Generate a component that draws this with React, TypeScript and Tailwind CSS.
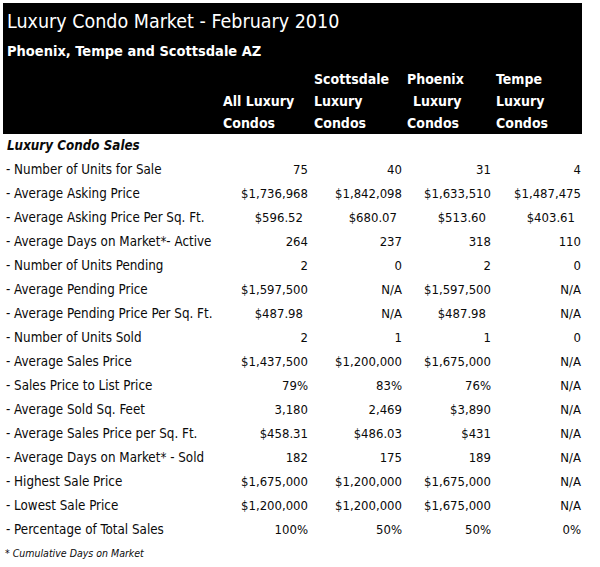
import React from "react";

type Row = { label: string; v: string[]; pad?: boolean[] };

const rows: Row[] = [
  { label: "- Number of Units for Sale", v: ["75", "40", "31", "4"] },
  { label: "- Average Asking Price", v: ["$1,736,968", "$1,842,098", "$1,633,510", "$1,487,475"] },
  { label: "- Average Asking Price Per Sq. Ft.", v: ["$596.52", "$680.07", "$513.60", "$403.61"], pad: [true, true, true, true] },
  { label: "- Average Days on Market*- Active", v: ["264", "237", "318", "110"] },
  { label: "- Number of Units Pending", v: ["2", "0", "2", "0"] },
  { label: "- Average Pending Price", v: ["$1,597,500", "N/A", "$1,597,500", "N/A"] },
  { label: "- Average Pending Price Per Sq. Ft.", v: ["$487.98", "N/A", "$487.98", "N/A"], pad: [true, false, true, false] },
  { label: "- Number of Units Sold", v: ["2", "1", "1", "0"] },
  { label: "- Average Sales Price", v: ["$1,437,500", "$1,200,000", "$1,675,000", "N/A"] },
  { label: "- Sales Price to List Price", v: ["79%", "83%", "76%", "N/A"] },
  { label: "- Average Sold Sq. Feet", v: ["3,180", "2,469", "$3,890", "N/A"] },
  { label: "- Average Sales Price per Sq. Ft.", v: ["$458.31", "$486.03", "$431", "N/A"] },
  { label: "- Average Days on Market* - Sold", v: ["182", "175", "189", "N/A"] },
  { label: "- Highest Sale Price", v: ["$1,675,000", "$1,200,000", "$1,675,000", "N/A"] },
  { label: "- Lowest Sale Price", v: ["$1,200,000", "$1,200,000", "$1,675,000", "N/A"] },
  { label: "- Percentage of Total Sales", v: ["100%", "50%", "50%", "0%"] },
];

const font = { fontFamily: '"DejaVu Sans Condensed", "DejaVu Sans", sans-serif' };

export default function App() {
  return (
    <div className="w-[600px] h-[567px] bg-white pt-[3px] text-[#0a0a0a]" style={font}>
      <div className="ml-[3px] w-[579px]">
        <div className="bg-black text-white pt-[7px]">
          <div className="h-[24px] leading-[24px] text-[19.5px] pl-[4px] whitespace-nowrap">Luxury Condo Market - February 2010</div>
          <div className="mt-[6px] h-[22px] leading-[22px] text-[14.5px] font-bold pl-[4px]">Phoenix, Tempe and Scottsdale AZ</div>
          <div className="mt-[6px] grid grid-cols-[217px_90px_94px_89px_89px] text-[14px] font-bold leading-[22px]">
            <div />
            <div className="pl-[3px] pt-[22px]">
              <div>All Luxury</div>
              <div>Condos</div>
            </div>
            <div className="pl-[4px]">
              <div>Scottsdale</div>
              <div>Luxury</div>
              <div>Condos</div>
            </div>
            <div className="pl-[3px]">
              <div>Phoenix</div>
              <div className="pl-[6px]">Luxury</div>
              <div>Condos</div>
            </div>
            <div className="pl-[3px]">
              <div>Tempe</div>
              <div>Luxury</div>
              <div>Condos</div>
            </div>
          </div>
        </div>
        <div className="h-[24px] leading-[24px] text-[13.3px] font-bold italic pl-[4px]">Luxury Condo Sales</div>
        {rows.map((r) => (
          <div key={r.label} className="grid grid-cols-[217px_90px_94px_89px_89px] h-[24px] leading-[24px] text-[13px]">
            <div className="pl-[3px] whitespace-nowrap text-[13.3px]">{r.label}</div>
            {r.v.map((val, i) => (
              <div
                key={i}
                className={
                  "text-right whitespace-nowrap " +
                  (r.pad && r.pad[i] ? "pr-[7px]" : i === 3 ? "pr-[1px]" : "pr-[2px]")
                }
              >
                {val}
              </div>
            ))}
          </div>
        ))}
        <div className="h-[22px] leading-[22px] text-[10.5px] italic pl-[2px]">* Cumulative Days on Market</div>
      </div>
    </div>
  );
}
